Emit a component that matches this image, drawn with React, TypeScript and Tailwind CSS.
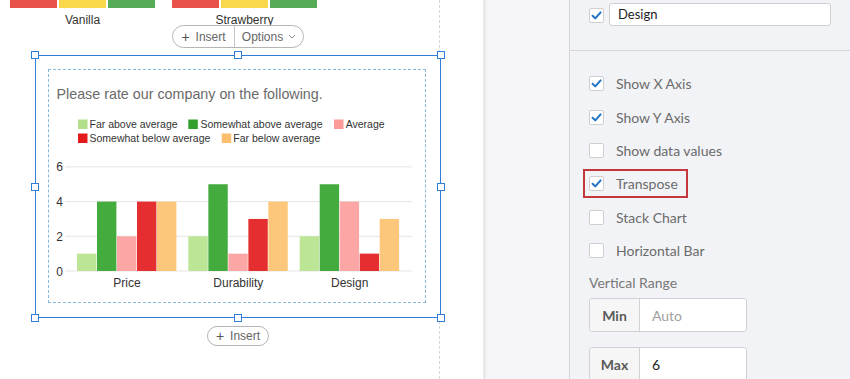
import React from "react";

type Series = { name: string; legend: string; bar: string };

const series: Series[] = [
  { name: "Far above average", legend: "#b2df8a", bar: "#bce596" },
  { name: "Somewhat above average", legend: "#33a02c", bar: "#44ab3e" },
  { name: "Average", legend: "#fb9a99", bar: "#fca6a5" },
  { name: "Somewhat below average", legend: "#e31a1c", bar: "#e52e2f" },
  { name: "Far below average", legend: "#fdbf6f", bar: "#fdc77b" },
];

const groups = [
  { label: "Price", values: [1, 4, 2, 4, 4] },
  { label: "Durability", values: [2, 5, 1, 3, 4] },
  { label: "Design", values: [2, 5, 4, 1, 3] },
];

// legend positions inside the chart svg
const legendPos = [
  { x: 29, y: 9.5, tx: 40.5, ty: 17.7 },
  { x: 139.3, y: 9.5, tx: 151.5, ty: 17.7 },
  { x: 285, y: 9.5, tx: 296.7, ty: 17.7 },
  { x: 29, y: 23.5, tx: 40.5, ty: 31.7 },
  { x: 172.7, y: 23.5, tx: 184.3, ty: 31.7 },
];

const Y0 = 161;
const UNIT = 17.35;

const Chart: React.FC = () => (
  <svg width={376} height={190} className="block">
    {series.map((s, i) => (
      <g key={s.name}>
        <rect x={legendPos[i].x} y={legendPos[i].y} width={9.5} height={9.5} fill={s.legend} />
        <text x={legendPos[i].tx} y={legendPos[i].ty} fontSize={10.5} fill="#333">
          {s.name}
        </text>
      </g>
    ))}

    {[0, 2, 4, 6].map((v) => (
      <g key={v}>
        <line x1={16} x2={363} y1={Y0 - v * UNIT} y2={Y0 - v * UNIT} stroke="#e5e5e5" strokeWidth={1} />
        <text x={14} y={Y0 - v * UNIT + 4.5} fontSize={12} fill="#333" textAnchor="end">
          {v}
        </text>
      </g>
    ))}

    {groups.map((g, gi) => {
      const gx = 28 + gi * 111.35;
      return (
        <g key={g.label}>
          {g.values.map((v, i) => (
            <rect
              key={i}
              x={gx + i * 20}
              y={Y0 - v * UNIT}
              width={19.4}
              height={v * UNIT}
              fill={series[i].bar}
            />
          ))}
          <text x={gx + 50} y={177} fontSize={12} fill="#333" textAnchor="middle">
            {g.label}
          </text>
        </g>
      );
    })}
  </svg>
);

const OptionBars: React.FC<{ label: string }> = ({ label }) => (
  <div className="w-[145px]">
    <div className="flex h-[8px] gap-[1.5px]">
      <div className="flex-1 bg-[#e9524b]" />
      <div className="flex-1 bg-[#f9d84b]" />
      <div className="flex-1 bg-[#56ab56]" />
    </div>
    <div className="mt-[4px] text-center text-[12px] leading-[16px] text-[#333]">{label}</div>
  </div>
);

const Handle: React.FC<{ className: string }> = ({ className }) => (
  <div className={`absolute h-[8px] w-[8px] border-[1.5px] border-[#2f7fd8] bg-white ${className}`} />
);

const Check: React.FC<{ checked?: boolean }> = ({ checked }) => (
  <div className="flex h-[15px] w-[15px] shrink-0 items-center justify-center rounded-[2px] border border-[#cfcfd2] bg-white">
    {checked && (
      <svg width="11" height="11" viewBox="0 0 11 11">
        <path d="M1.6 5.8 L4.3 8.4 L9.6 2.4" fill="none" stroke="#1f74c4" strokeWidth="2" strokeLinecap="round" strokeLinejoin="round" />
      </svg>
    )}
  </div>
);

const options = [
  { label: "Show X Axis", checked: true },
  { label: "Show Y Axis", checked: true },
  { label: "Show data values", checked: false },
  { label: "Transpose", checked: true, highlight: true },
  { label: "Stack Chart", checked: false },
  { label: "Horizontal Bar", checked: false },
];

const App: React.FC = () => {
  return (
    <div className="flex h-[379px] w-[850px] overflow-hidden">
      {/* ===== canvas ===== */}
      <div className="relative w-[483px] shrink-0 bg-white font-['Liberation_Sans',Arial,sans-serif]">
        <div className="absolute bottom-0 left-[439px] top-0 border-l border-dashed border-[#d6d6d6]" />

        <div className="relative flex h-[25px] gap-[17px] pl-[10px]">
          <OptionBars label="Vanilla" />
          <OptionBars label="Strawberry" />
        </div>

        <div className="relative ml-[35px] w-[406px]">
          <div className="flex justify-center">
            <div className="flex h-[23px] w-[132px] items-center rounded-full border border-[#b5b5b5] bg-white text-[12px] text-[#666]">
              <div className="flex h-full w-[62px] items-center justify-center gap-[6px] border-r border-[#c5c5c5]">
                <span className="text-[14px] leading-none text-[#555]">+</span>
                <span>Insert</span>
              </div>
              <div className="flex flex-1 items-center justify-center gap-[5px]">
                <span>Options</span>
                <svg width="8" height="5" viewBox="0 0 8 5">
                  <path d="M1 1 L4 4 L7 1" fill="none" stroke="#888" strokeWidth="1" />
                </svg>
              </div>
            </div>
          </div>

          {/* selected question */}
          <div className="relative mt-[7px] h-[263px] border-[1.5px] border-[#2f7fd8] bg-white pl-[11.5px] pt-[12.5px]">
            <Handle className="left-[-5px] top-[-5px]" />
            <Handle className="left-1/2 top-[-5px] -translate-x-1/2" />
            <Handle className="right-[-5px] top-[-5px]" />
            <Handle className="left-[-5px] top-1/2 -translate-y-1/2" />
            <Handle className="right-[-5px] top-1/2 -translate-y-1/2" />
            <Handle className="bottom-[-5px] left-[-5px]" />
            <Handle className="bottom-[-5px] left-1/2 -translate-x-1/2" />
            <Handle className="bottom-[-5px] right-[-5px]" />

            <div className="h-[234px] w-[378px] border border-dashed border-[#86b8dc]">
              <div className="pl-[8px] pt-[14px] text-[14.3px] leading-[20px] text-[#6a6a6a]">
                Please rate our company on the following.
              </div>
              <div className="mt-[6px]">
                <Chart />
              </div>
            </div>
          </div>

          <div className="mt-[8px] flex justify-center">
            <div className="flex h-[20px] w-[62px] items-center justify-center gap-[6px] rounded-full border border-[#b5b5b5] text-[12px] text-[#666]">
              <span className="text-[14px] leading-none text-[#555]">+</span>
              <span>Insert</span>
            </div>
          </div>
        </div>
      </div>

      {/* ===== gutter ===== */}
      <div className="w-[86px] shrink-0 border-l border-[#e9e9eb] bg-[#f5f5f7] shadow-[inset_3px_0_3px_-2px_rgba(0,0,0,0.08)]" />

      {/* ===== side panel ===== */}
      <div className="flex-1 border-l border-[#d6d6da] bg-[#f2f3f6] font-['Lato',sans-serif]">
        <div className="flex h-[51px] items-start gap-[5px] border-b border-[#d6d6da] pl-[19px] pt-[3px]">
          <div className="mt-[5px]">
            <Check checked />
          </div>
          <div className="flex h-[23px] w-[222px] items-center rounded-[3px] border border-[#cfcfd3] bg-white pl-[8px] text-[13px] text-[#222]">
            Design
          </div>
        </div>

        <div className="pl-[19px] pt-[16px]">
          {options.map((o) => (
            <div key={o.label} className="relative flex h-[33.4px] items-center gap-[12px]">
              {o.highlight && (
                <div className="absolute left-[-6px] top-[2px] h-[29px] w-[105px] border-2 border-[#c4373d]" />
              )}
              <Check checked={o.checked} />
              <span className="text-[14px] text-[#6b6b6b]">{o.label}</span>
            </div>
          ))}

          <div className="mt-[6px] text-[14px] leading-[20px] text-[#777]">Vertical Range</div>

          <div className="mt-[5px] flex h-[34px] w-[158px] overflow-hidden rounded-[3px] border border-[#d2d2d6] bg-white text-[14px]">
            <div className="flex w-[50px] items-center justify-center border-r border-[#d2d2d6] bg-[#f6f6f7] font-bold text-[#5a5a5a]">
              Min
            </div>
            <div className="flex items-center pl-[12px] text-[#a0a0a0]">Auto</div>
          </div>

          <div className="mt-[15px] flex h-[34px] w-[158px] overflow-hidden rounded-[3px] border border-[#d2d2d6] bg-white text-[14px]">
            <div className="flex w-[50px] items-center justify-center border-r border-[#d2d2d6] bg-[#f6f6f7] font-bold text-[#5a5a5a]">
              Max
            </div>
            <div className="flex items-center pl-[12px] text-[#222]">6</div>
          </div>
        </div>
      </div>
    </div>
  );
};

export default App;
